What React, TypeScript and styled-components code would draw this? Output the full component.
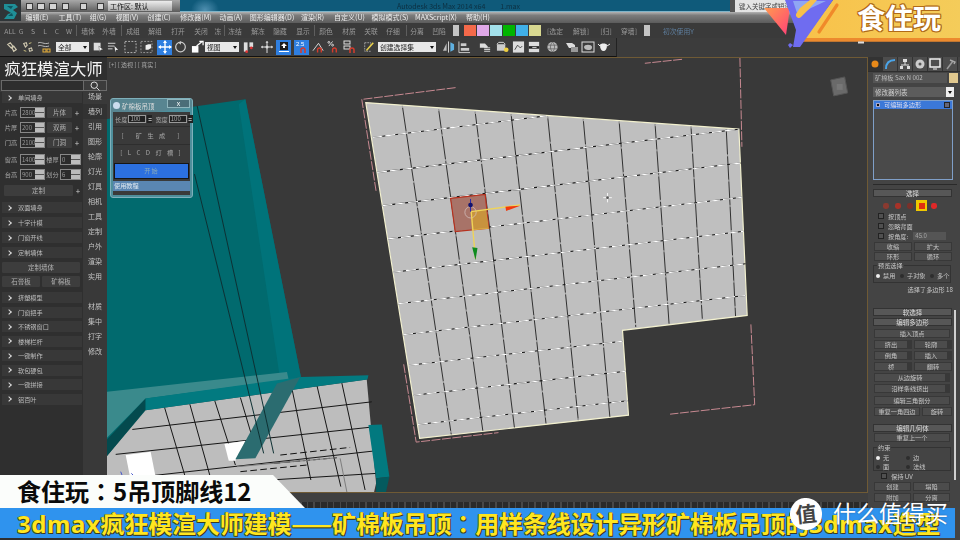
import React from "react";
import styled, { createGlobalStyle } from "styled-components";

const Global = createGlobalStyle`
  html, body { margin: 0; padding: 0; background: #3c3c3c; }
  * { box-sizing: border-box; }
`;
const CJK = `"Noto Sans CJK SC", "Noto Sans", sans-serif`;

const Page = styled.div`
  position: relative; width: 960px; height: 540px; overflow: hidden;
  background: #3f3f3f; font-family: ${CJK}; display: flex; flex-direction: column;
`;
const Chrome = styled.div`filter: blur(0.4px); display: flex; flex-direction: column; flex: none;`;
const TitleBar = styled.div`
  height: 12px; display: flex; background: radial-gradient(ellipse 14px 12px at 205px 10px, #4f8fb0 0, transparent 100%), #0f5a7a;
  border-bottom: 1px solid #7fb3c8; color: #0d2f40; font-size: 7px; line-height: 12px; position: relative; flex: none;
`;
const LogoTile = styled.div`
  position: absolute; left: 0; top: 0; width: 21px; height: 21px; background: #2f3538; z-index: 3;
  display: flex; align-items: center; justify-content: center;
`;
const Quick = styled.div`
  width: 180px; height: 12px; flex: none; background: linear-gradient(#a8a8a8, #5c5c5c);
  display: flex; align-items: center;
`;
const QIcon = styled.div<{ $ml: number; $w?: number }>`
  margin-left: ${(p) => p.$ml}px; width: ${(p) => p.$w ?? 7}px; height: 7px; background: #d4d4d4; border: 1px solid #3a3a3a; flex: none;
`;
const WorkDrop = styled.div`
  width: 64px; height: 10px; margin-left: 4px; background: linear-gradient(#ececec, #a8a8a8);
  color: #111; font-size: 7px; line-height: 10px; padding-left: 2px; flex: none;
`;
const TitleText = styled.div<{ $ml: number }>`margin-left: ${(p) => p.$ml}px; white-space: nowrap; flex: none;`;
const SearchBox = styled.div`
  position: absolute; left: 730px; top: 0; width: 70px; height: 12px; background: #e4e4e4;
  color: #444; font-size: 6.5px; line-height: 12px; padding-left: 4px;
  border-left: 5px solid #555; white-space: nowrap; overflow: hidden;
`;
const MenuBar = styled.div`
  height: 11px; display: flex; background: linear-gradient(#b4b4b4, #7c7c7c 30%, #5c5c5c);
  color: #eee; font-size: 7px; line-height: 11px;
`;
const Placed = styled.div<{ $ml: number; $w: number }>`
  margin-left: ${(p) => p.$ml}px; width: ${(p) => p.$w}px; flex: none; text-align: center; white-space: nowrap;
  display: flex; align-items: center; justify-content: center;
`;
const Row2 = styled.div`
  height: 15px; display: flex; align-items: center; background: #3a3a3a; color: #9a9a9a; font-size: 6.8px;
`;
const Sep = styled.div<{ $ml: number }>`
  margin-left: ${(p) => p.$ml}px; width: 1px; height: 11px; background: #5e5e5e; flex: none;
`;
const Swatch = styled.div<{ $c: string; $ml: number; $w?: number }>`
  margin-left: ${(p) => p.$ml}px; width: ${(p) => p.$w ?? 12}px; height: 11px; background: ${(p) => p.$c}; flex: none;
`;
const HintText = styled.div<{ $ml: number }>`
  margin-left: ${(p) => p.$ml}px; color: #5f7f9f; font-size: 6.8px; white-space: nowrap;
`;
const Row3Wrap = styled.div`height: 19px; background: #3c3c3c; display: flex;`;
const Row3 = styled.div`
  width: 617px; height: 19px; display: flex; align-items: center; border-bottom: 1px solid #111; border-right: 1px solid #222;
`;
const Tool = styled.div<{ $ml: number; $w: number; $on?: boolean }>`
  margin-left: ${(p) => p.$ml}px; width: ${(p) => p.$w}px; height: 15px; flex: none;
  background: ${(p) => (p.$on ? "#2f7fe0" : "transparent")};
  display: flex; align-items: center; justify-content: center;
`;
const Drop = styled.div<{ $ml: number; $w: number }>`
  margin-left: ${(p) => p.$ml}px; width: ${(p) => p.$w}px; height: 10px; flex: none; background: #e8e8e8;
  color: #222; font-size: 6.8px; line-height: 10px; padding-left: 2px; position: relative; white-space: nowrap;
  &::after { content: ""; position: absolute; right: 2px; top: 4px; border: 2px solid transparent; border-top: 3px solid #111; }
`;
const Main = styled.div`flex: 1; display: flex; min-height: 0;`;

const Left = styled.div`
  width: 107px; flex: none; background: #393939; display: flex; flex-direction: column;
  color: #b8b8b8; font-size: 7px; filter: blur(0.4px);
`;
const BrandName = styled.div`
  height: 23px; color: #f4f4f4; font-size: 16.4px; line-height: 22px; text-align: center; white-space: nowrap; flex: none;
  background: #2f2f2f;
`;
const SearchRow = styled.div`
  height: 11px; margin: 0 0 1px 1px; border: 1px solid #6a6a6a; background: #2e2e2e; display: flex;
  justify-content: flex-end; align-items: center; flex: none;
`;
const SearchBtn = styled.div`
  width: 23px; height: 100%; background: #3c3c3c; border-left: 1px solid #6a6a6a; display: flex; align-items: center; justify-content: center;
`;
const Cols = styled.div`flex: 1; display: flex;`;
const Accordion = styled.div`width: 83px; background: #2f2f2f; padding: 0 0 0 2px; display: flex; flex-direction: column; flex: none;`;
const Section = styled.div<{ $mt?: number }>`
  height: 11px; width: 80px; margin-top: ${(p) => p.$mt ?? 3.5}px; background: #383838; display: flex; align-items: center;
  padding-left: 5px; gap: 7px; font-size: 6.2px; flex: none; color: #bbb; white-space: nowrap;
`;
const Chevron = styled.span`
  width: 4px; height: 4px; border-top: 1px solid #ddd; border-right: 1px solid #ddd; transform: rotate(45deg); flex: none;
`;
const FRow = styled.div<{ $mt?: number }>`
  height: 11px; display: flex; align-items: center; margin-top: ${(p) => p.$mt ?? 4}px; flex: none; font-size: 6.2px; white-space: nowrap;
`;
const FLabel = styled.div<{ $w: number }>`width: ${(p) => p.$w}px; text-align: center; flex: none; color: #aaa;`;
const Spin = styled.div<{ $w: number }>`
  width: ${(p) => p.$w}px; height: 11px; border: 1px solid #888; background: #2b2b2b; color: #999; font-size: 6px;
  line-height: 9px; padding-left: 1px; position: relative; flex: none; overflow: hidden;
  &::after {
    content: ""; position: absolute; right: 0; top: 0; bottom: 0; width: 9px;
    background: linear-gradient(#bbb 0 44%, #555 44% 56%, #bbb 56%);
  }
`;
const PanelBtn = styled.div<{ $w?: number; $ml?: number }>`
  width: ${(p) => p.$w ?? 24}px; margin-left: ${(p) => p.$ml ?? 0}px; height: 11px; background: #3d3d3d; text-align: center; line-height: 11px;
  flex: none; color: #b0b0b0; font-size: 6.5px; border-radius: 1px;
`;
const Plus = styled.div`width: 10px; text-align: center; flex: none; color: #ccc; font-size: 8px;`;
const SideTabs = styled.div`
  flex: 1; display: flex; flex-direction: column; margin-top: -3px; align-items: center; color: #c4c4c4; font-size: 7px;
`;
const SideTab = styled.div<{ $mt?: number; $on?: boolean }>`
  height: 15px; line-height: 15px; margin-top: ${(p) => p.$mt ?? 0}px; flex: none; width: 100%; text-align: center;
  background: ${(p) => (p.$on ? "#323232" : "transparent")};
`;

const Center = styled.div`flex: 1; display: flex; flex-direction: column; min-width: 0;`;
const Viewport = styled.div`
  position: relative; height: 436px; border: 1px solid #6f5a35; border-left: 0; background: #393939; flex: none; overflow: hidden;
`;
const Scene = styled.svg`display: block; width: 100%; height: 100%; filter: blur(0.3px);`;
const VpLabel = styled.div`
  position: absolute; left: 2px; top: 2px; color: #a8a8a8; font-size: 6px; white-space: pre; filter: blur(0.3px);
`;
const Timeline = styled.div`
  height: 8px; margin-top: 9px; flex: none;
  background: repeating-linear-gradient(90deg, #2a2a2a 0 5px, #484848 5px 6.5px);
`;
const Right = styled.div`
  width: 92px; flex: none; background: #444; display: flex; flex-direction: column; position: relative;
  color: #c6c6c6; font-size: 6.5px; padding-left: 5px; filter: blur(0.4px);
`;
const CmdTabs = styled.div`height: 15px; display: flex; align-items: center; margin-left: -5px; flex: none; border-bottom: 1px solid #2e2e2e;`;
const CmdTab = styled.div<{ $on?: boolean }>`
  width: 15px; height: 14px; flex: none; display: flex; align-items: center; justify-content: center;
  background: ${(p) => (p.$on ? "#333" : "#4d4d4d")}; border-right: 1px solid #333;
`;
const NameRow = styled.div`height: 10px; margin-top: 1px; display: flex; gap: 2px; flex: none;`;
const NameBox = styled.div`
  width: 74px; background: #555; font-size: 6.2px; line-height: 10px; padding-left: 2px; white-space: nowrap; overflow: hidden; color: #bbb;
`;
const ColorBox = styled.div`width: 9px; background: #e0c88e;`;
const ModDrop = styled.div`
  height: 10px; width: 81px; margin-top: 4px; background: linear-gradient(90deg, #5c5c5c 0 90%, #eee 90%); color: #ccc; font-size: 6.5px; line-height: 10px;
  padding-left: 2px; flex: none; position: relative;
  &::after { content: ""; position: absolute; right: 2px; top: 4px; border: 2px solid transparent; border-top: 3px solid #111; }
`;
const Stack = styled.div`
  height: 80px; width: 80px; margin-top: 3px; border: 1px solid #7f9fc8; background: #4a4a4a; flex: none; padding-top: 0;
`;
const StackRow = styled.div`
  height: 8px; background: #3b78d8; font-size: 6.2px; line-height: 8px; color: #dde; display: flex; align-items: center; padding: 0 2px; gap: 4px;
`;
const StackPlus = styled.div`width: 4px; height: 4px; background: #111; border: 1px solid #aac; flex: none;`;
const StackEnd = styled.div`width: 6px; height: 6px; margin-left: auto; background: #667; border: 1px solid #222; flex: none;`;
const Divider = styled.div`height: 1px; width: 84px; margin-top: 4px; background: #2a2a2a; flex: none;`;
const Roll = styled.div<{ $mt?: number }>`
  width: 79px; height: 8px; margin-top: ${(p) => p.$mt ?? 5}px; background: #575757; border: 1px solid #333; text-align: center; font-size: 6.5px;
  line-height: 6px; flex: none; color: #ddd; white-space: nowrap;
`;
const SubIcons = styled.div`display: flex; align-items: center; height: 11px; margin-top: 3px; gap: 1px; padding-left: 7px; flex: none;`;
const Sub = styled.div<{ $on?: boolean; $c: string }>`
  width: 11px; height: 11px; flex: none; background: ${(p) => (p.$on ? "#f0c800" : "transparent")};
  display: flex; align-items: center; justify-content: center;
  &::after { content: ""; width: 6px; height: 6px; background: ${(p) => p.$c}; border-radius: ${(p) => (p.$on ? "0" : "40%")}; }
`;
const Check = styled.div<{ $mt?: number; $ml?: number }>`
  height: 8px; display: flex; align-items: center; gap: 4px; margin-top: ${(p) => p.$mt ?? 2}px; padding-left: ${(p) => p.$ml ?? 5}px; flex: none;
  font-size: 6.2px; white-space: nowrap;
`;
const Box = styled.div`width: 6px; height: 6px; border: 1px solid #222; background: #505050; flex: none;`;
const AngleInput = styled.div`
  width: 33px; height: 8px; margin-left: 1px; background: #555; font-size: 6px; line-height: 8px; padding-left: 2px; flex: none; color: #aaa;
`;
const TwoBtns = styled.div<{ $mt?: number }>`display: flex; gap: 2px; margin-top: ${(p) => p.$mt ?? 2}px; padding-left: 1px; height: 9px; flex: none;`;
const RBtn = styled.div<{ $w: number; $flag?: boolean }>`
  width: ${(p) => p.$w}px; height: 9px; background: #4c4c4c; border: 1px solid #383838; border-right-width: ${(p) => (p.$flag ? 5 : 1)}px;
  text-align: center; line-height: 7px; font-size: 6.2px; flex: none; white-space: nowrap; color: #c4c4c4;
`;
const GroupBox = styled.div<{ $h: number; $mt?: number }>`
  width: 78px; height: ${(p) => p.$h}px; margin-top: ${(p) => p.$mt ?? 4}px; border: 1px solid #333; flex: none; position: relative; padding: 6px 2px 0;
  font-size: 6.2px;
`;
const GroupTitle = styled.div`
  position: absolute; left: 3px; top: -5px; background: #444; padding: 0 1px; font-size: 6.2px; line-height: 9px; white-space: nowrap;
`;
const Radios = styled.div<{ $mt?: number }>`display: flex; margin-top: ${(p) => p.$mt ?? 2}px; white-space: nowrap;`;
const Radio = styled.div<{ $w: number }>`
  display: flex; align-items: center; gap: 3px; width: ${(p) => p.$w}px; line-height: 8px; flex: none;
`;
const Dot = styled.span<{ $on?: boolean }>`
  width: 4px; height: 4px; border-radius: 50%; background: ${(p) => (p.$on ? "#eee" : "#2d2d2d")}; flex: none;
`;
const RightNote = styled.div`text-align: right; padding-right: 7px; margin-top: 2px; font-size: 6.2px; height: 9px; line-height: 9px; flex: none; white-space: nowrap;`;
const Scrollbar = styled.div`
  position: absolute; right: 4px; top: 253px; width: 2px; height: 170px; background: #cfcfcf;
`;

const Dialog = styled.div`
  position: absolute; left: 110px; top: 98px; width: 83px; height: 100px; border-radius: 3px;
  background: rgba(95, 150, 165, 0.82); border: 1px solid #7fb0bb; padding: 0 2px 2px; display: flex; flex-direction: column; filter: blur(0.4px);
`;
const DialogHead = styled.div`height: 13px; display: flex; align-items: center; color: #ddd; font-size: 6.5px; flex: none; white-space: nowrap; gap: 2px;`;
const DialogIcon = styled.div`width: 7px; height: 7px; border-radius: 50%; background: #cde; flex: none;`;
const DialogClose = styled.div`
  width: 23px; height: 9px; margin-left: auto; margin-top: -4px; background: #4b6d78; border: 1px solid #8fb5bd; color: #fff;
  text-align: center; font-size: 7px; line-height: 7px; flex: none;
`;
const DialogBody = styled.div`flex: 1; background: #3a3a3a; display: flex; flex-direction: column; color: #a8a8a8; font-size: 6.2px;`;
const DimRow = styled.div`height: 14px; display: flex; align-items: center; gap: 1px; flex: none; padding-left: 2px; white-space: nowrap;`;
const MiniInput = styled.div`
  width: 18px; height: 8px; background: #222; border: 1px solid #999; color: #aaa; font-size: 6px; line-height: 6px; padding-left: 1px; flex: none;
`;
const MiniSpin = styled.div`
  width: 5px; height: 8px; background: #222; color: #aaa; flex: none; font-size: 5px; line-height: 8px; text-align: center; margin-right: 2px;
`;
const DBtn = styled.div<{ $h: number }>`
  height: ${(p) => p.$h}px; line-height: ${(p) => p.$h}px; text-align: center; border-top: 1px solid #2e2e2e; letter-spacing: 2px; flex: none; white-space: pre;
`;
const DStart = styled.div`
  height: 16px; margin: 3px 1px 2px; background: #2c70e0; border: 1px solid #161616; color: #8ab; text-align: center; line-height: 14px; letter-spacing: 1px; flex: none;
`;
const DTutorial = styled.div`height: 10px; background: #5a86b2; color: #dfe8f0; line-height: 10px; padding-left: 1px; flex: none;`;

const BrandWrap = styled.svg`position: absolute; left: 760px; top: 0; width: 200px; height: 48px;`;
const BrandText = styled.div`
  position: absolute; left: 857px; top: -1px; font-size: 28px; line-height: 36px; font-weight: 700; color: #fff; letter-spacing: 0;
  text-shadow: 1px 0 #b06a18, -1px 0 #b06a18, 0 1px #b06a18, 0 -1px #b06a18, 1px 1px #b06a18, -1px -1px #b06a18, 1px -1px #b06a18, -1px 1px #b06a18;
`;
const Tag = styled.div`
  position: absolute; left: 0; top: 475px; width: 305px; height: 33px; background: #fbfdfb;
  clip-path: polygon(0 0, 273px 0, 305px 33px, 0 33px); color: #0a0a0a; font-weight: 700; font-size: 24px; line-height: 32px;
  padding-left: 17px; white-space: nowrap;
`;
const Strip = styled.div`
  position: absolute; left: 0; top: 508px; width: 955px; height: 30px; background: #2f93ee; color: #ffe61f; font-size: 24px;
  font-weight: 700; line-height: 29px; padding-left: 17px; white-space: nowrap; letter-spacing: -0.15px;
  text-shadow: 1px 1px 0 #3a3a20, -0.5px -0.5px 0 #4a4a20, 0.5px -0.5px 0 #4a4a20, -0.5px 0.5px 0 #4a4a20;
`;
const Latin = styled.span`letter-spacing: 0.6px; font-family: "Noto Sans", sans-serif;`;
const Colon = styled.span`font-family: "Noto Sans CJK TC", sans-serif;`;
const WmCircle = styled.div`
  position: absolute; left: 790px; top: 498px; width: 32px; height: 32px; border-radius: 50%; background: #fff; color: #444;
  font-size: 21px; font-weight: 700; line-height: 30px; text-align: center; transform: rotate(-6deg);
`;
const WmText = styled.div`
  position: absolute; left: 833px; top: 496px; color: #fff; font-size: 23px; line-height: 32px; white-space: nowrap; text-shadow: 0 0 2px rgba(0,0,0,.35);
`;

const menu: [number, number, string][] = [
  [27, 20, "编辑(E)"], [60, 20, "工具(T)"], [90, 16, "组(G)"], [117, 20, "视图(V)"], [149, 20, "创建(C)"],
  [182, 28, "修改器(M)"], [221, 20, "动画(A)"], [253, 38, "图形编辑器(D)"], [302, 21, "渲染(R)"], [336, 27, "自定义(U)"],
  [372, 36, "模拟模式(S)"], [417, 38, "MAXScript(X)"], [467, 22, "帮助(H)"],
];
const row2a: [number, number, string][] = [
  [5, 10, "ALL"], [17, 8, "G"], [29, 8, "S"], [41, 8, "L"], [53, 8, "C"], [65, 8, "W"],
];
const row2b: [number, number, string][] = [[82, 12, "墙体"], [103, 12, "外墙"]];
const row2c: [number, number, string][] = [[127, 12, "成组"], [149, 12, "解组"], [172, 12, "打开"], [195, 12, "关闭"], [215, 6, "冻"]];
const row2d: [number, number, string][] = [[229, 12, "冻结"], [252, 12, "解冻"], [274, 12, "隐藏"], [297, 12, "显示"]];
const row2e: [number, number, string][] = [[320, 12, "颜色"], [343, 12, "材质"], [365, 12, "关联"], [387, 12, "仔细"]];
const row2f: [number, number, string][] = [[411, 12, "分离"], [433, 12, "凹陷"]];

const placeAfter = (list: [number, number, string][], start: number) => {
  let cur = start;
  return list.map(([l, w, t]) => {
    const ml = l - cur;
    cur = l + w;
    return <Placed key={t + l} $ml={ml} $w={w}>{t}</Placed>;
  });
};

const S = { width: 14, height: 14, viewBox: "0 0 14 14", fill: "none" } as const;
const icons: Record<string, React.ReactNode> = {
  link: <svg {...S}><path d="M2 4l3-2 3 4-2 2zM7 8l2-2 3 4-3 2z" stroke="#cfc8b0" strokeWidth="1.4" /></svg>,
  unlink: <svg {...S}><path d="M2 3l3-1 1 3-2 2zM8 9l3-1 1 3-3 1z" stroke="#cfc8b0" strokeWidth="1.3" /><path d="M8 3l3-1M2 11l3 1" stroke="#e0d28a" /></svg>,
  bind: <svg {...S}><path d="M1 3c3-2 6 2 11 0M1 6c3-2 6 2 11 0" stroke="#bbb" /><rect x="6" y="9" width="3" height="3" stroke="#e8b03a" /><rect x="10" y="9" width="3" height="3" stroke="#e8b03a" /></svg>,
  sel: <svg {...S}><rect x="2" y="2" width="8" height="9" fill="#ddd" /><path d="M8 6l5 4-3 .5L9 13z" fill="#fff" stroke="#333" strokeWidth=".5" /></svg>,
  list: <svg {...S}><path d="M1 3h8M1 6h7M1 9h5" stroke="#ddd" /><path d="M8 6l4 4-2.5.3L9 13z" fill="#eee" /></svg>,
  dash: <svg {...S}><rect x="1" y="1" width="12" height="12" stroke="#bbb" strokeDasharray="2 1.5" /></svg>,
  dashCube: <svg {...S}><rect x="1" y="1" width="12" height="12" stroke="#999" strokeDasharray="2 1.5" /><path d="M6 5l3-1h3v4l-3 2H6z" fill="#eee" /></svg>,
  move: <svg {...S}><path d="M7 1v12M1 7h12" stroke="#fff" strokeWidth="1.4" /><path d="M7 0l2 3H5zM7 14l2-3H5zM0 7l3-2v4zM14 7l-3-2v4z" fill="#fff" /></svg>,
  rot: <svg {...S}><circle cx="7" cy="7" r="5.2" stroke="#ccc" strokeWidth="1.3" /><path d="M5 2.8L7.5.5v4z" fill="#ccc" /></svg>,
  scale: <svg {...S}><rect x="1" y="6" width="7" height="7" fill="#fff" /><path d="M6 6l6-5M9 1h4v4" stroke="#fff" strokeWidth="1.3" /></svg>,
  mirrorT: <svg {...S}><rect x="2" y="2" width="4" height="10" fill="#ddd" /><rect x="8" y="2" width="4" height="5" fill="#ddd" /><circle cx="5" cy="12" r="1.5" fill="#d33" /><circle cx="10" cy="8" r="1.5" fill="#d33" /></svg>,
  cross: <svg {...S}><path d="M7 1v12M1 7h12" stroke="#ddd" /><circle cx="7" cy="7" r="1.5" fill="#ddd" /><path d="M7 1l1.5 2h-3zM1 7l2-1.5v3zM13 7l-2-1.5v3z" fill="#ccc" /></svg>,
  snap: <svg {...S}><path d="M3 2h8v8H3z" fill="#1c1c1c" /><path d="M7 3l3 3H8v2H6V6H4z" fill="#fff" /><path d="M2 11h10v1H2z" fill="#fff" /></svg>,
  snap25: <svg {...S}><text x="1" y="6" fontSize="6" fill="#fff" fontFamily="Liberation Sans">2.5</text><path d="M6 13V10a2 2 0 0 1 4 0v3" stroke="#d43c2c" strokeWidth="1.6" /></svg>,
  ang: <svg {...S}><path d="M1 11L7 3l5 8" stroke="#ddd" /><path d="M6 13V10a2 2 0 0 1 4 0v3" stroke="#d43c2c" strokeWidth="1.5" /></svg>,
  pct: <svg {...S}><path d="M2 6L6 1" stroke="#ddd" /><circle cx="2" cy="2" r="1" stroke="#ddd" /><circle cx="6" cy="5" r="1" stroke="#ddd" /><path d="M6 13V10a2 2 0 0 1 4 0v3" stroke="#d43c2c" strokeWidth="1.5" /></svg>,
  spin: <svg {...S}><rect x="1" y="1" width="6" height="3" stroke="#ddd" /><rect x="1" y="6" width="6" height="3" stroke="#ddd" /><path d="M7 13V10a2 2 0 0 1 4 0v3" stroke="#d43c2c" strokeWidth="1.5" /></svg>,
  pencil: <svg {...S}><path d="M2 2h7v3M2 2v10h8" stroke="#aaa" strokeDasharray="2 1" /><path d="M4 11L12 2" stroke="#e8d04a" strokeWidth="1.8" /></svg>,
  mirror: <svg {...S}><path d="M7 1v12" stroke="#ddd" /><path d="M5 3v8L1 11z" fill="#bbb" /><path d="M9 2v10l4-2V4z" fill="#5fb0e0" /></svg>,
  align: <svg {...S}><path d="M1 1v12h12" stroke="#ccc" /><rect x="3" y="3" width="6" height="3" fill="#ccc" /><rect x="3" y="8" width="9" height="3" fill="#ccc" /></svg>,
  layer: <svg {...S}><path d="M1 3h6l3 3v2H1z" fill="#ddd" /><path d="M6 8h7M6 10h7M6 12h7" stroke="#eee" /></svg>,
  curve: <svg {...S}><rect x="1" y="4" width="9" height="7" fill="#ccc" /><path d="M1 4l2-2h5l2 2" stroke="#ddd" /><circle cx="11" cy="10" r="2.5" fill="#f0d040" /></svg>,
  schem: <svg {...S}><rect x="1" y="1" width="12" height="12" fill="#ddd" /><path d="M3 10l3-5 3 3 2-2" stroke="#444" /></svg>,
  mat: <svg {...S}><rect x="1" y="1" width="12" height="12" fill="#ddd" /><path d="M1 6h12v3H1z" fill="#222" /><path d="M5 7.5h5" stroke="#eee" /></svg>,
  globe: <svg {...S}><circle cx="7" cy="7" r="5.5" fill="#bbb" /><path d="M2 5h10M2 9h10M7 1.5c-3 4-3 7 0 11M7 1.5c3 4 3 7 0 11" stroke="#555" strokeWidth=".7" /></svg>,
  rsetup: <svg {...S}><path d="M1 3h6l3 2v3H4z" fill="#ddd" /><rect x="6" y="7" width="7" height="5" fill="#999" /></svg>,
  rframe: <svg {...S}><rect x="1" y="2" width="12" height="10" stroke="#ddd" /><path d="M3 7c0-3 8-3 8 0s-2 3-4 3-4-1-4-3z" fill="#bbb" /></svg>,
  pot: <svg {...S}><path d="M3 5c0-2 7-2 7 0 0 4-1.5 6-3.5 6S3 9 3 5z" fill="#eee" /><path d="M10 6l3-2M3 6L1 4" stroke="#eee" /></svg>,
};

const tools: { l: number; w: number; k: string; on?: boolean; drop?: string }[] = [
  { l: 6, w: 12, k: "link" }, { l: 22, w: 12, k: "unlink" }, { l: 37, w: 14, k: "bind" },
  { l: 56, w: 33, k: "", drop: "全部" }, { l: 92, w: 12, k: "sel" }, { l: 107, w: 13, k: "list" },
  { l: 124, w: 13, k: "dash" }, { l: 140, w: 13, k: "dashCube" }, { l: 157, w: 15, k: "move", on: true },
  { l: 174, w: 13, k: "rot" }, { l: 191, w: 13, k: "scale" }, { l: 205, w: 34, k: "", drop: "视图" },
  { l: 242, w: 13, k: "mirrorT" }, { l: 260, w: 14, k: "cross" }, { l: 276, w: 15, k: "snap", on: true },
  { l: 294, w: 15, k: "snap25", on: true }, { l: 312, w: 13, k: "ang" }, { l: 327, w: 13, k: "pct" },
  { l: 343, w: 14, k: "spin" }, { l: 363, w: 12, k: "pencil" }, { l: 378, w: 58, k: "", drop: "创建选择集" },
  { l: 442, w: 13, k: "mirror" }, { l: 458, w: 13, k: "align" }, { l: 479, w: 12, k: "layer" },
  { l: 496, w: 13, k: "curve" }, { l: 512, w: 13, k: "schem" }, { l: 528, w: 12, k: "mat" },
  { l: 546, w: 13, k: "globe" }, { l: 565, w: 14, k: "rsetup" }, { l: 581, w: 14, k: "rframe" }, { l: 597, w: 14, k: "pot" },
];

const sideTabs: [string, number?, boolean?][] = [
  ["场景", 0], ["墙列", 0, true], ["引用"], ["图形"], ["轮廓"], ["灯光"], ["灯具"], ["相机"], ["工具"], ["定制"],
  ["户外"], ["渲染"], ["实用"], ["材质", 15], ["集中"], ["打字"], ["修改"],
];
const lowerSections = ["挤塑模型", "门窗把手", "不锈钢窗口", "楼梯栏杆", "一键制作", "软包硬包", "一键拼接", "  铝百叶"];

const hz: number[][] = [
  [68,155,590,90],[82,260,1170,130],[98,360,1175,232],[115,460,1180,335],[130,560,1185,437],[145,655,1190,535],
  [160,748,1190,630],[178,840,820,768],[192,930,830,858],[205,1018,835,947],
];
const vt: number[][] = [
  [158,60,305,1048],[267,70,400,1037],[377,78,495,1027],[485,85,590,1015],[595,92,687,1005],[702,100,782,995],
  [810,107,860,725],[918,115,960,715],[1026,122,1060,700],[1132,130,1160,692],
];
const floorH: number[][] = [[75,1018,795,935],[25,1093,803,1010],[0,1172,809,1082],[10,1200,812,1150]];
const floorV: number[][] = [
  [172,952,240,1180],[248,942,312,1170],[323,932,385,1125],[400,922,450,1090],[555,895,612,1170],[630,885,702,1190],[705,878,775,1200],
];

export default function App() {
  return (
    <Page>
      <Global />
      <Chrome>
        <TitleBar>
          <LogoTile>
            <svg width="16" height="18" viewBox="0 0 16 18"><path d="M1 2h11l3 3-5 3 4 3-3 6H1l4-5 3-1-3-2-4-2z" fill="#1f8f98" /><path d="M4 4h6l-2 3zM5 14l4-3 1 3z" fill="#0d5660" /></svg>
          </LogoTile>
          <Quick>
            <QIcon $ml={26} /><QIcon $ml={4} $w={8} /><QIcon $ml={4} $w={8} /><QIcon $ml={5} /><QIcon $ml={11} /><QIcon $ml={10} />
            <WorkDrop>工作区: 默认</WorkDrop>
          </Quick>
          <TitleText $ml={217}>Autodesk 3ds Max  2014 x64</TitleText>
          <TitleText $ml={15}>1.max</TitleText>
          <SearchBox>键入关键字或短语</SearchBox>
        </TitleBar>
        <MenuBar>{placeAfter(menu, 0)}</MenuBar>
        <Row2>
          {placeAfter(row2a, 0)}<Sep $ml={3} />{placeAfter(row2b, 77)}<Sep $ml={6} />{placeAfter(row2c, 122)}
          <Sep $ml={3} />{placeAfter(row2d, 225)}<Sep $ml={5} />{placeAfter(row2e, 315)}<Sep $ml={7} />{placeAfter(row2f, 407)}
          <Swatch $c="#c4c4c4" $ml={8} $w={6} />
          <Swatch $c="#f4694a" $ml={5} />
          <Swatch $c="#e0a8e8" $ml={1} />
          <Swatch $c="#a2e0ea" $ml={1} />
          <Swatch $c="#00b400" $ml={1} />
          <Swatch $c="#40b0e8" $ml={1} />
          <Swatch $c="#d8d890" $ml={1} />
          <Placed $ml={4} $w={20}>[选定</Placed>
          <Placed $ml={5} $w={22}>解锁]</Placed>
          <Placed $ml={5} $w={18}>[归]</Placed>
          <Placed $ml={5} $w={18}>穿墙]</Placed>
          <Swatch $c="#c4c4c4" $ml={6} $w={6} />
          <HintText $ml={13}>初次使用Y</HintText>
        </Row2>
        <Row3Wrap>
          <Row3>
            {tools.map((t, i) => {
              const prev = i === 0 ? 0 : tools[i - 1].l + tools[i - 1].w;
              return t.drop ? (
                <Drop key={i} $ml={t.l - prev} $w={t.w}>{t.drop}</Drop>
              ) : (
                <Tool key={i} $ml={t.l - prev} $w={t.w} $on={t.on}>{icons[t.k]}</Tool>
              );
            })}
          </Row3>
        </Row3Wrap>
      </Chrome>
      <Main>
        <Left>
          <BrandName>疯狂模渲大师</BrandName>
          <SearchRow>
            <SearchBtn>
              <svg width="10" height="10" viewBox="0 0 10 10" fill="none"><circle cx="4.2" cy="4.2" r="3.2" stroke="#ddd" /><path d="M6.5 6.5L9.5 9.5" stroke="#ddd" /></svg>
            </SearchBtn>
          </SearchRow>
          <Cols>
            <Accordion>
              <Section $mt={0}><Chevron />单间墙身</Section>
              <FRow $mt={4}><FLabel $w={18}>片高</FLabel><Spin $w={25}>2800</Spin><PanelBtn $ml={2} $w={25}>片体</PanelBtn><Plus>+</Plus></FRow>
              <FRow><FLabel $w={18}>片厚</FLabel><Spin $w={25}>200</Spin><PanelBtn $ml={2} $w={25}>双两</PanelBtn><Plus>+</Plus></FRow>
              <FRow><FLabel $w={18}>门高</FLabel><Spin $w={25}>2100</Spin><PanelBtn $ml={2} $w={25}>门洞</PanelBtn><Plus>+</Plus></FRow>
              <FRow $mt={6}><FLabel $w={18}>窗高</FLabel><Spin $w={25}>1400</Spin><FLabel $w={15}>楼厚</FLabel><Spin $w={21}>0</Spin></FRow>
              <FRow><FLabel $w={18}>台高</FLabel><Spin $w={25}>900</Spin><FLabel $w={15}>划分</FLabel><Spin $w={21}>6</Spin></FRow>
              <FRow $mt={5}><PanelBtn $ml={2} $w={69}>定制</PanelBtn><Plus>+</Plus></FRow>
              <Section $mt={6}><Chevron />双面墙身</Section>
              <Section $mt={4}><Chevron />十字计模</Section>
              <Section $mt={4}><Chevron />门窗开线</Section>
              <Section $mt={4}><Chevron />定制墙体</Section>
              <FRow $mt={4}><PanelBtn $w={78}>定制墙体</PanelBtn></FRow>
              <FRow $mt={3}><PanelBtn $w={38}>石膏板</PanelBtn><PanelBtn $ml={2} $w={38}>矿棉板</PanelBtn></FRow>
              {lowerSections.map((s, i) => (
                <Section key={s} $mt={i === 0 ? 5 : 3.5}><Chevron />{s}</Section>
              ))}
            </Accordion>
            <SideTabs>
              {sideTabs.map(([t, mt, on]) => <SideTab key={t} $mt={mt} $on={on}>{t}</SideTab>)}
            </SideTabs>
          </Cols>
        </Left>
        <Center>
          <Viewport>
            <Scene viewBox="107 57 761 435" fill="none">
              <g transform="translate(107 90) scale(0.3333)">
                <polygon points="-3,85 415,25 582,860 540,900 115,960 -3,1100" fill="#016a6e" />
                <polygon points="395,40 415,25 582,860 520,870" fill="#00737a" />
                <polygon points="115,960 780,868 808,1180 800,1215 -3,1215 -3,1100" fill="#bdbdbd" />
                {floorH.map((l, i) => <line key={i} x1={l[0]} y1={l[1]} x2={l[2]} y2={l[3]} stroke="#151515" strokeWidth="3" />)}
                {floorV.map((l, i) => <line key={i} x1={l[0]} y1={l[1]} x2={l[2]} y2={l[3]} stroke="#151515" strokeWidth="3" />)}
                <polygon points="55,1095 130,1085 145,1160 70,1170" fill="#fff" />
                <polygon points="352,1062 415,1052 385,1112 365,1112" fill="#fff" />
                <polygon points="-3,905 540,845 545,868 115,925 -3,1045" fill="#3a8a8c" />
                <polygon points="-3,1050 115,925 115,958 -3,1100" fill="#044a4e" />
                <polygon points="115,925 582,860 785,855 782,868 115,960" fill="#027a80" />
                <polygon points="510,880 580,860 445,1105 385,1108" fill="#2b6c70" />
                <polygon points="785,1005 825,1003 848,1160 808,1165" fill="#02797f" />
                <polygon points="808,1165 848,1160 836,1215 808,1215" fill="#045a5e" />
                <line x1="270" y1="45" x2="500" y2="1090" stroke="#0e3033" strokeWidth="3" />
                <line x1="262" y1="250" x2="470" y2="1090" stroke="#0e3033" strokeWidth="3" />
                <path d="M520 1095L730 1072M500 1120L690 1103M400 1145L600 1125" stroke="#111" strokeWidth="3" strokeDasharray="20 10" />
                <path d="M700 1105L722 1215M390 1130L690 1103" stroke="#7c7c7c" strokeWidth="3" />
                <path d="M40 1145l4 10M72 1150l6 6" stroke="#4455cc" strokeWidth="3" />
              </g>
              <g transform="translate(350 85) scale(0.3333)">
                <polygon points="48,50 1170,130 1195,690 820,735 838,990 210,1060" fill="#bfbfbf" stroke="#f3f1cf" strokeWidth="3.5" />
                {vt.map((l, i) => (
                  <g key={i}>
                    <line x1={l[0]} y1={l[1]} x2={l[2]} y2={l[3]} stroke="#1a1a1a" strokeWidth="2.6" />
                    <line x1={l[0]} y1={l[1]} x2={l[2]} y2={l[3]} stroke="#e6e6e6" strokeWidth="2" strokeDasharray="6 70" />
                  </g>
                ))}
                {hz.map((l, i) => (
                  <g key={i}>
                    <line x1={l[0]} y1={l[1]} x2={l[2]} y2={l[3]} stroke="#161616" strokeWidth="3.2" />
                    <line x1={l[0]} y1={l[1]} x2={l[2]} y2={l[3]} stroke="#fff" strokeWidth="3.2" strokeDasharray="30 9" />
                  </g>
                ))}
                <polygon points="303,338 407,326 418,428 317,438" fill="#a87368" stroke="#b8311e" strokeWidth="3.5" />
                <polygon points="365,378 410,372 418,428 367,433" fill="#c8933e" />
                <line x1="367" y1="433" x2="418" y2="428" stroke="#e8c84a" strokeWidth="2" />
                <circle cx="363" cy="380" r="17" stroke="#d8c8c8" strokeWidth="2" />
                <line x1="365" y1="378" x2="512" y2="358" stroke="#f0d458" strokeWidth="4" />
                <line x1="365" y1="378" x2="378" y2="520" stroke="#f0d458" strokeWidth="4" />
                <line x1="363" y1="378" x2="363" y2="340" stroke="#2a2aaa" strokeWidth="3" />
                <polygon points="468,363 512,360 470,376" fill="#f23a0c" />
                <polygon points="368,485 384,487 378,524" fill="#0d8a1e" />
                <circle cx="363" cy="358" r="7" fill="#12126e" />
                <path d="M775 322v28M762 336h26" stroke="#fff" strokeWidth="2.5" />
                <circle cx="775" cy="336" r="4" fill="#555" />
              </g>
              <g stroke="#c88a92" strokeWidth="1" strokeDasharray="9 1.5" fill="none">
                <path d="M456 86.7L362 98.5L376.5 191.5" />
                <path d="M404 364L416.5 442L499 432.5" />
                <path d="M683 58.3L645.7 62.3" />
                <path d="M741 57L743 146" />
                <path d="M752 324L755.8 404.5L671 414" />
              </g>
              <polygon points="832,79 846,76 849,92 835,95" fill="#6a6a6a" stroke="#555" />
              <rect x="838" y="83" width="6" height="6" fill="#777" />
            </Scene>
            <VpLabel>{"[+] [ 透视 ] [ 真实 ]"}</VpLabel>
          </Viewport>
          <Timeline />
        </Center>
        <Right>
          <CmdTabs>
            <CmdTab $on><svg width="10" height="10"><circle cx="5" cy="5" r="3.5" fill="#e88a1a" /></svg></CmdTab>
            <CmdTab><svg width="12" height="12" fill="none"><path d="M2 11c0-6 3-9 9-9" stroke="#4aa4e8" strokeWidth="2" /></svg></CmdTab>
            <CmdTab><svg width="12" height="12" fill="none"><rect x="4" y="1" width="4" height="3" fill="#ddd" /><path d="M6 4v3M2 7h8" stroke="#ddd" /><rect x="1" y="8" width="3" height="3" fill="#ddd" /><rect x="8" y="8" width="3" height="3" fill="#ddd" /></svg></CmdTab>
            <CmdTab><svg width="12" height="12" fill="none"><circle cx="6" cy="6" r="4.5" fill="#ccc" /><circle cx="6" cy="6" r="1.5" fill="#555" /></svg></CmdTab>
            <CmdTab><svg width="12" height="12" fill="none"><rect x="1" y="1" width="10" height="8" stroke="#eee" strokeWidth="1.5" /><path d="M4 11h4" stroke="#eee" /></svg></CmdTab>
            <CmdTab><svg width="12" height="12" fill="none"><path d="M3 11L9 3" stroke="#999" strokeWidth="1.6" /><path d="M6 2l5 2-1 2" stroke="#aaa" strokeWidth="1.4" /></svg></CmdTab>
          </CmdTabs>
          <NameRow><NameBox>矿棉板 Sax N 002</NameBox><ColorBox /></NameRow>
          <ModDrop>修改器列表</ModDrop>
          <Stack>
            <StackRow><StackPlus />可编辑多边形<StackEnd /></StackRow>
          </Stack>
          <Divider />
          <Roll $mt={4}>选择</Roll>
          <SubIcons>
            <Sub $c="#8a3a30" /><Sub $c="#a83228" /><Sub $c="#7a302a" />
            <Sub $on $c="#e03010" /><Sub $c="#e02828" />
          </SubIcons>
          <Check $mt={1}><Box />按顶点</Check>
          <Check><Box />忽略背面</Check>
          <Check><Box />按角度:<AngleInput>45.0</AngleInput></Check>
          <TwoBtns $mt={2}><RBtn $w={38}>收缩</RBtn><RBtn $w={38}>扩大</RBtn></TwoBtns>
          <TwoBtns $mt={1}><RBtn $w={38}>环形</RBtn><RBtn $w={38}>循环</RBtn></TwoBtns>
          <GroupBox $h={18} $mt={4}>
            <GroupTitle>预览选择</GroupTitle>
            <Radios $mt={0}><Radio $w={24}><Dot $on />禁用</Radio><Radio $w={30}><Dot />子对象</Radio><Radio $w={20}><Dot />多个</Radio></Radios>
          </GroupBox>
          <RightNote>选择了多边形 18</RightNote>
          <Roll $mt={14}>软选择</Roll>
          <Roll $mt={2}>编辑多边形</Roll>
          <TwoBtns $mt={3}><RBtn $w={76}>插入顶点</RBtn></TwoBtns>
          <TwoBtns $mt={2}><RBtn $w={38} $flag>挤出</RBtn><RBtn $w={38} $flag>轮廓</RBtn></TwoBtns>
          <TwoBtns $mt={2}><RBtn $w={38} $flag>倒角</RBtn><RBtn $w={38} $flag>插入</RBtn></TwoBtns>
          <TwoBtns $mt={2}><RBtn $w={38} $flag>桥</RBtn><RBtn $w={38}>翻转</RBtn></TwoBtns>
          <TwoBtns $mt={2}><RBtn $w={76} $flag>从边旋转</RBtn></TwoBtns>
          <TwoBtns $mt={2}><RBtn $w={76} $flag>沿样条线挤出</RBtn></TwoBtns>
          <TwoBtns $mt={3}><RBtn $w={76}>编辑三角剖分</RBtn></TwoBtns>
          <TwoBtns $mt={2}><RBtn $w={46}>重复一角四边</RBtn><RBtn $w={30}>旋转</RBtn></TwoBtns>
          <Roll $mt={8}>编辑几何体</Roll>
          <TwoBtns $mt={1}><RBtn $w={76}>重复上一个</RBtn></TwoBtns>
          <GroupBox $h={24} $mt={5}>
            <GroupTitle>约束</GroupTitle>
            <Radios $mt={0}><Radio $w={30}><Dot $on />无</Radio><Radio $w={30}><Dot />边</Radio></Radios>
            <Radios $mt={1}><Radio $w={30}><Dot />面</Radio><Radio $w={30}><Dot />法线</Radio></Radios>
          </GroupBox>
          <Check $mt={1} $ml={8}><Box />保持 UV</Check>
          <TwoBtns $mt={2}><RBtn $w={37}>创建</RBtn><RBtn $w={37}>塌陷</RBtn></TwoBtns>
          <TwoBtns $mt={2}><RBtn $w={37}>附加</RBtn><RBtn $w={37}>分离</RBtn></TwoBtns>
          <Scrollbar />
        </Right>
      </Main>

      <Dialog>
        <DialogHead><DialogIcon />矿棉板吊顶<DialogClose>x</DialogClose></DialogHead>
        <DialogBody>
          <DimRow>长度<MiniInput>100</MiniInput><MiniSpin>≑</MiniSpin>宽度<MiniInput>100</MiniInput><MiniSpin>≑</MiniSpin></DimRow>
          <DBtn $h={18}>{"[   矿 生 成   ]"}</DBtn>
          <DBtn $h={16}>{"[ L C D 灯 槽 ]"}</DBtn>
          <DStart>开始</DStart>
          <DTutorial>使用教程</DTutorial>
        </DialogBody>
      </Dialog>

      <BrandWrap viewBox="0 0 200 48">
        <defs>
          <linearGradient id="pk" x1="0" y1="0" x2="1" y2="1"><stop offset="0" stopColor="#ff9a50" /><stop offset="1" stopColor="#ff3f78" /></linearGradient>
          <linearGradient id="yl" x1="0" y1="0" x2="1" y2="0"><stop offset="0" stopColor="#f8c24a" /><stop offset="1" stopColor="#f4cc5a" /></linearGradient>
        </defs>
        <polygon points="73,0 200,0 200,38 45,38" fill="url(#yl)" />
        <polygon points="45,38 200,38 200,41.7 43,41.7" fill="#ec8a2e" />
        <polygon points="4,8 30,8 26,35" fill="url(#pk)" />
        <polygon points="25,0 73,0 40,47 33,47 36,30" fill="#6f6cf0" />
        <polygon points="33,1 66,1 51,8 38,16" fill="#8fa6f4" />
        <path d="M50 0L40 8l-4 6a3 3 0 0 0 5 3l8-8 8-9z" fill="#f7c04a" />
        <path d="M59 32L77 5" stroke="#f08a2a" strokeWidth="3.2" strokeLinecap="round" />
        <polygon points="30,43 33,45 30,48 28,45" fill="#6f6cf0" />
        <rect x="98" y="41.5" width="6" height="2" fill="#ddd" />
      </BrandWrap>
      <BrandText>食住玩</BrandText>

      <Tag>食住玩<Colon>：</Colon>5吊顶脚线12</Tag>
      <Strip><Latin>3dmax</Latin>疯狂模渲大师建模——矿棉板吊顶<Colon>：</Colon>用样条线设计异形矿棉板吊顶的<Latin>3dmax</Latin>造型</Strip>
      <WmCircle>值</WmCircle>
      <WmText>什么值得买</WmText>
    </Page>
  );
}
